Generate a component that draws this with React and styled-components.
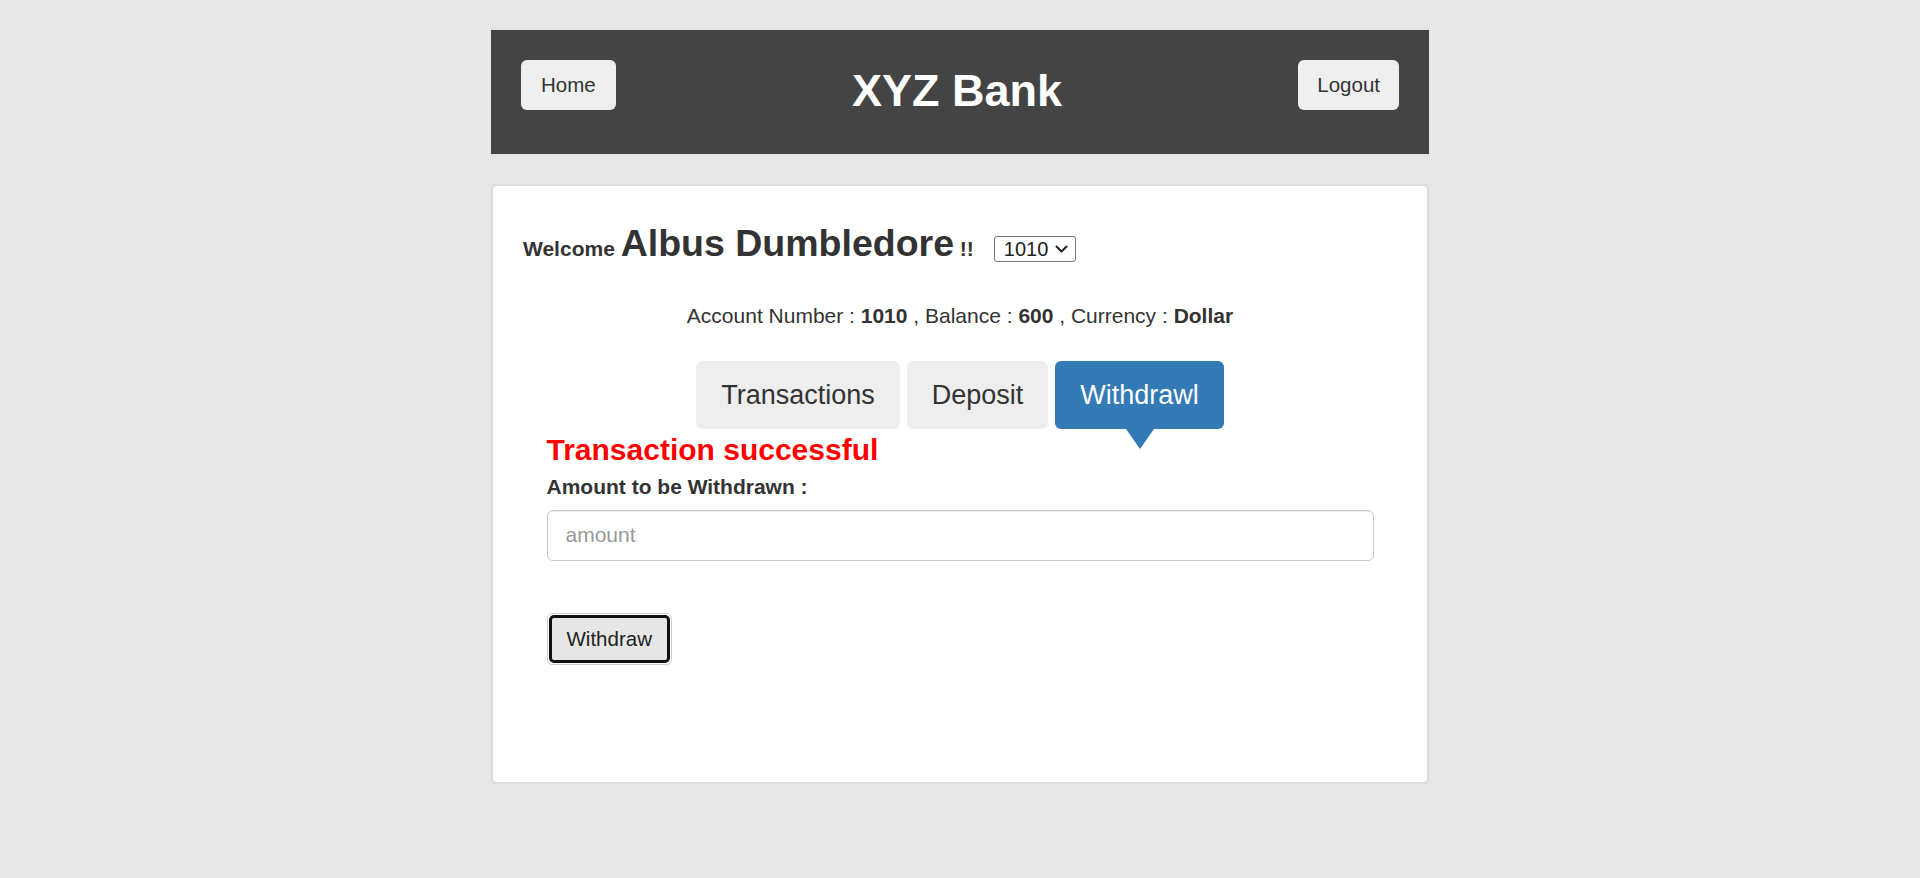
import React from "react";
import styled, { createGlobalStyle } from "styled-components";

const Global = createGlobalStyle`
  html, body { margin: 0; padding: 0; }
  body {
    background: #e7e7e7;
    font-family: "Liberation Sans", Arial, Helvetica, sans-serif;
    color: #333;
  }
  * { box-sizing: border-box; }
`;

const Page = styled.div`
  width: 938px;
  margin: 30px auto 0;
`;

const Header = styled.header`
  height: 124px;
  background: #444;
  display: flex;
  justify-content: space-between;
  align-items: flex-start;
  padding: 30px 30px 0;
`;

const NavButton = styled.button`
  background: #efefef;
  color: #333;
  border: none;
  border-radius: 6px;
  font-family: inherit;
  font-size: 20.5px;
  line-height: 30px;
  padding: 10px ${(p) => (p.$right ? "19px" : "20px")};
  cursor: pointer;
`;

const Title = styled.h1`
  margin: 6px 0 0;
  color: #fff;
  font-size: 45px;
  font-weight: bold;
  line-height: 1.1;
`;

const Card = styled.main`
  margin-top: 30px;
  min-height: 600px;
  background: #fff;
  border: 2px solid #dcdcdc;
  border-radius: 6px;
  box-shadow: 0 1px 1px #d6d6d6;
  padding: 30px;
`;

const WelcomeRow = styled.div`
  display: flex;
  align-items: baseline;
  margin-top: 7px;
  font-weight: bold;
  line-height: 1.1;
  white-space: pre;
`;

const Small = styled.span`
  font-size: 21px;
`;

const Name = styled.span`
  font-size: 37.5px;
`;

const SelectWrap = styled.span`
  position: relative;
  display: inline-flex;
  margin-left: 20px;
`;

const AccountSelect = styled.select`
  appearance: none;
  -webkit-appearance: none;
  width: 82px;
  height: 26px;
  font-family: inherit;
  font-weight: normal;
  font-size: 20px;
  line-height: 24px;
  color: #222;
  border: 1px solid #767676;
  border-radius: 3px;
  background: #fff;
  padding: 0 24px 0 9px;
`;

const Chevron = styled.svg`
  position: absolute;
  right: 8px;
  top: 50%;
  transform: translateY(-50%);
  pointer-events: none;
`;

const AccountLine = styled.p`
  margin: 37px 0 0;
  text-align: center;
  font-size: 21px;
  line-height: 30px;
`;

const Tabs = styled.nav`
  margin-top: 30px;
  display: flex;
  justify-content: center;
  gap: 7px;
`;

const Tab = styled.button`
  position: relative;
  border: none;
  border-radius: 6px;
  font-family: inherit;
  font-size: 27px;
  line-height: 38px;
  padding: 15px 25px;
  background: ${(p) => (p.$active ? "#337ab7" : "#eeeeee")};
  color: ${(p) => (p.$active ? "#fff" : "#333")};
  cursor: pointer;

  &::after {
    content: "";
    display: ${(p) => (p.$active ? "block" : "none")};
    position: absolute;
    left: 50%;
    bottom: -20px;
    transform: translateX(-50%);
    border-left: 14px solid transparent;
    border-right: 14px solid transparent;
    border-top: 20px solid #337ab7;
  }
`;

const Panel = styled.section`
  padding: 0 23.5px;
`;

const Success = styled.h4`
  margin: 4px 0 0;
  color: #ff0000;
  font-size: 30px;
  font-weight: bold;
  line-height: 1.1;
`;

const Label = styled.label`
  display: block;
  margin: 6px 0 7.5px;
  font-size: 21px;
  font-weight: bold;
  line-height: 30px;
`;

const Input = styled.input`
  display: block;
  width: 100%;
  height: 51px;
  padding: 9px 18px;
  font-family: inherit;
  font-size: 21px;
  color: #555;
  border: 1.5px solid #ccc;
  border-radius: 6px;
  box-shadow: inset 0 1px 1px rgba(0, 0, 0, 0.075);
  outline: none;

  &::placeholder {
    color: #999;
  }
`;

const SubmitWrap = styled.div`
  margin-top: 52px;
  display: inline-flex;
  padding: 1px;
  border: 1px solid #cfcfcf;
  border-radius: 5px;
`;

const SubmitButton = styled.button`
  height: 48px;
  padding: 0 15px;
  font-family: inherit;
  font-size: 20.5px;
  color: #222;
  background: #e6e6e6;
  border: 3px solid #111;
  border-radius: 5px;
  cursor: pointer;
`;

export default function App() {
  return (
    <>
      <Global />
      <Page>
        <Header>
          <NavButton>Home</NavButton>
          <Title>XYZ Bank</Title>
          <NavButton $right>Logout</NavButton>
        </Header>
        <Card>
          <WelcomeRow>
            <Small>Welcome </Small>
            <Name>Albus Dumbledore</Name>
            <Small> !!</Small>
            <SelectWrap>
              <AccountSelect defaultValue="1010">
                <option value="1010">1010</option>
                <option value="1011">1011</option>
                <option value="1012">1012</option>
              </AccountSelect>
              <Chevron width="13" height="8" viewBox="0 0 13 8" aria-hidden="true">
                <path d="M1.5 1.5 L6.5 6.5 L11.5 1.5" fill="none" stroke="#222" strokeWidth="2" strokeLinecap="round" strokeLinejoin="round" />
              </Chevron>
            </SelectWrap>
          </WelcomeRow>
          <AccountLine>
            Account Number : <strong>1010</strong> , Balance : <strong>600</strong> , Currency : <strong>Dollar</strong>
          </AccountLine>
          <Tabs>
            <Tab>Transactions</Tab>
            <Tab>Deposit</Tab>
            <Tab $active>Withdrawl</Tab>
          </Tabs>
          <Panel>
            <Success>Transaction successful</Success>
            <Label htmlFor="amount">Amount to be Withdrawn :</Label>
            <Input id="amount" type="number" placeholder="amount" />
            <SubmitWrap>
              <SubmitButton>Withdraw</SubmitButton>
            </SubmitWrap>
          </Panel>
        </Card>
      </Page>
    </>
  );
}
